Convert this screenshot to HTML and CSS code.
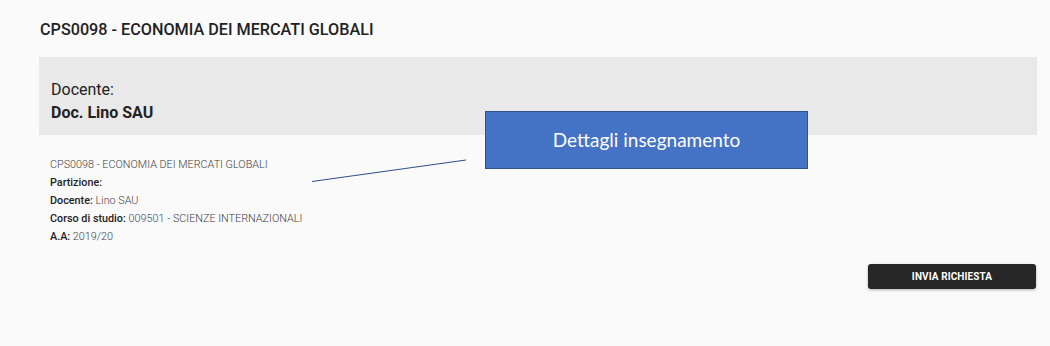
FILE: index.html
```html
<!DOCTYPE html>
<html lang="it">
<head>
<meta charset="utf-8">
<title>Dettagli insegnamento</title>
<link rel="stylesheet" href="styles.css">
</head>
<body>
<div class="page">
  <h1 class="title">CPS0098 - ECONOMIA DEI MERCATI GLOBALI</h1>
  <section class="teacher-box">
    <div class="teacher-label">Docente:</div>
    <div class="teacher-name">Doc. Lino SAU</div>
  </section>
  <ul class="details">
    <li><span class="val">CPS0098 - ECONOMIA DEI MERCATI GLOBALI</span></li>
    <li><span class="lbl">Partizione:</span></li>
    <li><span class="lbl">Docente:</span> <span class="val">Lino SAU</span></li>
    <li><span class="lbl">Corso di studio:</span> <span class="val code">009501</span> <span class="val">- SCIENZE INTERNAZIONALI</span></li>
    <li><span class="lbl">A.A:</span> <span class="val">2019/20</span></li>
  </ul>
  <div class="actions">
    <button class="btn">INVIA RICHIESTA</button>
  </div>
</div>
<svg class="leader" width="1050" height="346" viewBox="0 0 1050 346"><line x1="312" y1="181.5" x2="466" y2="160" stroke="#2f4f8a" stroke-width="1"/></svg>
<div class="callout">Dettagli insegnamento</div>
</body>
</html>
```
FILE: styles.css
```css
html, body {
  margin: 0;
  padding: 0;
  background: #fafafa;
  width: 1050px;
  height: 346px;
  overflow: hidden;
}
body {
  font-family: Roboto, "Liberation Sans", sans-serif;
  color: #222;
  position: relative;
}
.page {
  margin-left: 39px;
  width: 998px;
  padding-top: 20px;
}
.title {
  margin: 0 0 17px 1px;
  font-size: 16.2px;
  line-height: 20px;
  font-weight: 500;
  color: #222;
}
.teacher-box {
  background: #e9e9e9;
  height: 78px;
  box-sizing: border-box;
  padding: 21px 12px 0;
}
.teacher-label {
  font-size: 16px;
  line-height: 23px;
  color: #222;
}
.teacher-name {
  font-size: 16px;
  line-height: 23px;
  font-weight: 700;
  color: #222;
}
.details {
  list-style: none;
  margin: 21px 0 0;
  padding: 0 0 0 11px;
  font-size: 10.8px;
  line-height: 18px;
}
.lbl {
  font-weight: 500;
  color: #222;
}
.val {
  font-weight: 300;
  color: #3f3f3f;
}
.code {
  color: #34486a;
}
.actions {
  display: flex;
  justify-content: flex-end;
  margin-top: 18px;
  padding-right: 1px;
}
.btn {
  width: 168px;
  height: 25px;
  border: none;
  border-radius: 3px;
  background: #262626;
  color: #fff;
  font-family: Roboto, "Liberation Sans", sans-serif;
  font-size: 10px;
  font-weight: 700;
  letter-spacing: 0.1px;
  box-shadow: 0 1px 3px rgba(0,0,0,0.3);
  padding: 0;
}
.leader {
  position: absolute;
  left: 0;
  top: 0;
  pointer-events: none;
}
.callout {
  position: absolute;
  left: 485px;
  top: 111px;
  width: 323px;
  height: 58px;
  box-sizing: border-box;
  background: #4472c4;
  border: 1px solid #2f528f;
  color: #fff;
  font-family: Lato, "Open Sans", sans-serif;
  font-size: 19px;
  display: flex;
  align-items: center;
  justify-content: center;
  padding-bottom: 2px;
}
```
